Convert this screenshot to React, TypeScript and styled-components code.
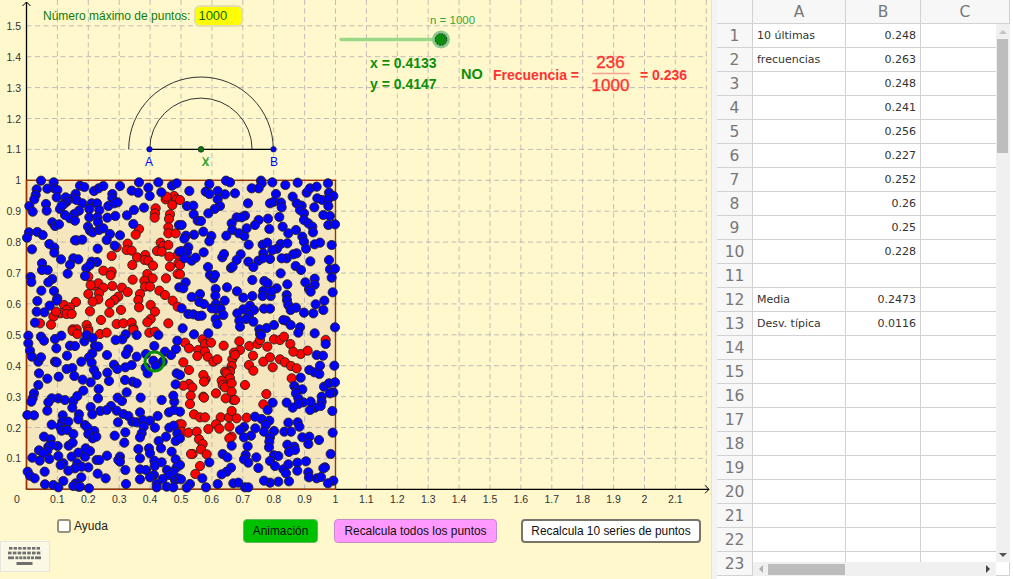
import React from 'react';
import styled, { createGlobalStyle } from 'styled-components';

// =============================================================================
// Constants
// =============================================================================

const PANEL_YELLOW = '#fff8cc';
const SQUARE_FILL = '#f6e6bd';
const GRAPH_GREEN = '#0a8f0a';
const FREQ_RED = '#ff3333';

const ORIGIN_X = 26.5;
const ORIGIN_Y = 489.3;
const STEP = 30.9;

const sx = (v: number) => ORIGIN_X + (v * 10 * STEP);
const sy = (v: number) => ORIGIN_Y - (v * 10 * STEP);

// Points read off the picture, per 160x160 tile at 3x: [tile left, tile top, "x,y ..."]
type Tile = [number, number, string];

const RED_TILES: Tile[] = [
  [20, 170, `437,88 462,78 470,88 457,105 440,80 407,115 405,130 404,143 450,133 447,147 445,172 445,190 467,190 357,177 347,194 323,221 320,240 335,242 290,232 275,258 351,262 376,255 374,270 385,272 399,287 337,285 411,243 422,218 430,228 445,225 425,245 473,255 448,260 475,280 450,290 473,312 250,302 275,305 272,316 382,312 398,325 373,332 375,350 390,350 338,329 438,325 205,320 222,347 235,340 212,345 250,353 277,348 306,353 323,366 205,372 237,370 235,388 218,395 295,380 283,390 270,400 360,372 355,390 357,412 392,405 418,362 435,375 458,392 473,410 168,396 132,405 150,412 140,420 122,430 140,432 155,432 102,438 100,440 108,425 60,460 93,464 210,424 243,450 268,428 303,420 405,425 392,447 382,457 445,460 290,462 310,460 335,458 340,475 200,465 205,478 158,478 170,478`],
  [180, 170, `0,90 0,285 0,313`],
  [20, 330, `158,3 172,12 205,5 240,12 260,8 388,8 405,5 340,0 478,283`],
  [180, 330, `15,38 27,55 55,60 68,28 75,42 75,65 93,38 131,47 178,34 180,60 162,68 157,88 165,75 155,108 148,122 150,125 135,125 140,130 150,145 125,152 128,165 135,172 155,160 155,185 160,210 165,210 137,205 108,190 70,200 72,203 77,148 70,135 72,155 27,162 10,97 27,120 52,78 83,80 100,95 112,88 10,167 37,172 32,197 30,222 195,165 208,48 233,42 240,30 262,50 282,28 300,30 312,20 331,42 362,72 383,62 340,65 437,30 219,77 250,95 270,82 300,88 315,97 333,108 350,115 207,105 220,122 278,112 335,145 259,192 250,223 42,253 60,262 75,262 122,262 147,262 155,243 170,265 200,263 108,283 85,297 118,296 148,290 5,283 5,305 25,308 50,305 57,328 68,342 63,358 38,372 33,372 80,373 155,320 148,325 60,408 46,432`],
];

const BLUE_TILES: Tile[] = [
  [20, 170, `63,32 101,37 50,58 47,75 43,88 82,56 103,55 112,60 110,82 180,47 193,51 222,63 236,55 250,48 300,48 357,37 415,37 456,47 470,40 335,62 355,68 385,53 389,78 424,67 277,72 277,85 265,108 283,100 293,97 167,72 157,85 137,82 140,95 170,90 187,100 131,103 120,117 125,107 78,102 80,122 28,108 38,125 215,100 231,100 208,117 238,120 177,122 163,132 135,135 150,145 165,152 208,142 232,142 234,157 262,143 286,138 321,136 342,120 372,113 97,157 105,168 117,163 204,170 210,182 218,187 237,180 250,175 270,192 300,196 340,162 477,165 27,187 21,203 52,186 68,195 170,211 165,211 187,209 260,210 284,227 88,222 103,233 103,248 36,238 233,236 123,268 160,265 175,268 150,284 66,280 66,300 83,300 143,311 199,295 231,276 215,275 210,285 195,318 32,321 34,336 97,327 85,337 64,362 102,363 112,385 110,392 52,393 89,407 50,425 73,427 45,458 478,245 478,352`],
  [180, 170, `88,42 138,32 150,37 243,32 245,40 277,37 316,45 353,38 444,40 215,55 236,55 28,63 77,65 88,72 113,63 135,73 165,70 113,88 120,108 104,117 85,130 21,108 40,107 41,133 53,152 63,153 5,165 204,100 270,100 282,95 303,98 305,112 288,72 338,80 350,100 365,107 360,120 372,130 403,112 380,68 390,55 410,50 447,68 460,78 412,85 427,90 445,87 445,108 430,135 450,138 298,141 264,146 236,150 195,137 170,142 185,142 155,160 157,180 177,190 193,198 200,175 225,165 268,177 308,170 325,190 348,180 372,150 385,160 397,170 399,187 445,165 465,163 70,185 42,194 18,197 13,206 94,198 88,214 139,197 367,200 372,215 378,236 404,223 420,218 455,225 206,224 248,224 262,218 302,222 322,220 291,236 277,240 250,250 350,250 340,253 320,265 305,265 270,267 235,272 205,275 220,291 248,265 25,232 21,247 5,243 13,265 35,272 47,263 71,247 127,262 132,252 182,253 170,270 153,294 158,290 84,291 90,315 100,325 105,315 391,274 447,270 347,288 363,300 302,310 450,298 465,296 455,323 217,330 253,333 263,340 322,343 290,355 250,363 17,337 10,355 107,357 141,352 171,364 106,377 60,372 35,381 58,396 72,402 190,383 217,378 248,378 272,378 275,363 320,375 321,390 376,337 404,326 404,344 387,357 392,365 458,367 433,392 407,403 134,392 108,402 95,415 108,417 122,417 130,435 5,415 25,432 40,433 55,438 65,437 190,418 210,407 222,420 207,435 172,430 198,447 220,455 252,416 270,416 325,405 332,420 348,413 372,428 400,430 430,420 310,450 318,452 107,447 112,462 178,452 180,470 282,465 260,474 238,478 332,465 360,472 465,472 8,475`],
  [20, 330, `25,17 63,20 72,32 105,27 124,17 193,34 200,15 218,24 25,40 30,62 36,80 55,95 63,82 109,55 141,77 150,47 165,48 225,48 235,50 217,70 207,82 184,95 105,95 110,97 215,98 261,75 282,104 292,117 316,112 335,105 140,117 157,114 222,120 230,135 262,128 57,130 82,146 116,140 163,138 188,149 55,165 267,153 315,150 338,155 350,160 212,157 236,177 190,182 320,187 42,190 38,205 34,215 115,205 135,210 160,213 172,198 95,205 85,217 82,242 22,255 42,256 234,205 293,203 306,213 273,228 290,242 212,231 241,243 260,240 217,253 157,233 177,253 175,268 128,256 127,275 145,275 310,252 325,258 294,277 337,275 350,277 362,203 425,210 360,247 369,270 390,272 413,258 371,290 405,293 447,247 462,240 463,215 460,197 467,163 95,284 120,290 125,302 142,300 160,312 195,285 203,293 223,303 205,312 218,325 229,320 72,320 92,328 146,347 158,338 113,348 85,350 95,345 82,362 57,361 70,370 37,383 59,392 88,387 115,378 284,317 316,307 313,338 365,310 360,322 416,333 438,320 467,333 448,293 461,287 472,310 423,355 387,355 355,357 390,370 360,385 455,365 403,392 425,397 467,388 155,380 175,368 195,380 197,355 210,363 130,400 122,405 172,400 185,410 205,412 165,415 145,422 230,390 238,390 261,377 300,380 295,390 300,395 316,420 360,418 378,420 404,408 402,435 390,442 441,420 470,412 460,425 447,435 428,447 23,425 30,437 44,445 74,425 184,442 167,460 233,431 257,445 130,453 75,463 100,465 115,472 160,468 175,470 207,475 180,470 318,462 360,448 410,462 410,472 440,470 465,450 475,445 460,472 403,48 378,72 400,92 428,95 435,65 453,75 377,113 383,130 408,108 415,15 472,32 468,57 317,13 307,28 287,30 325,58 318,72 350,15 350,80 470,130`],
  [180, 330, `42,13 85,10 240,12 243,15 355,8 404,10 437,42 410,75 429,77 388,120 403,127 418,132 420,107 463,107 362,143 343,168 350,178 367,178 348,190 355,205 432,170 447,160 465,157 460,187 450,190 425,200 425,215 422,228 405,233 390,240 392,215 370,217 355,222 338,233 320,218 278,218 263,240 457,243 225,260 245,267 268,272 257,285 252,305 282,303 270,322 268,335 267,352 192,291 180,300 226,295 213,317 192,322 203,349 155,347 325,278 353,277 358,290 313,305 333,305 367,322 388,320 385,342 417,330 458,308 322,344 343,350 345,360 327,366 452,372 128,372 142,382 197,375 192,388 205,398 229,382 88,397 153,413 140,425 125,433 235,414 282,376 295,378 270,393 285,408 325,403 310,418 318,430 352,398 378,394 352,422 385,427 387,442 435,412 430,415 410,445 423,441 460,452 444,460 327,454 295,455 270,458 252,452 113,462 160,460 175,458 195,472 205,472 67,445 78,472 30,462 20,473 3,448 0,405 0,325 0,245 0,135`],
];

const readTiles = (tiles: Tile[]) =>
  tiles.flatMap(([left, top, list]) =>
    list.split(' ').map((pair) => {
      const [x, y] = pair.split(',').map(Number);
      return { x: left + x / 3, y: top + y / 3 };
    }),
  );

const RED_POINTS = readTiles(RED_TILES);
const BLUE_POINTS = readTiles(BLUE_TILES);

const tickLabel = (k: number) => (k % 10 === 0 ? String(k / 10) : (k / 10).toFixed(1));

const SHEET_ROWS: { a?: string; b?: string }[] = [
  { a: '10 últimas', b: '0.248' },
  { a: 'frecuencias', b: '0.263' },
  { b: '0.248' },
  { b: '0.241' },
  { b: '0.256' },
  { b: '0.227' },
  { b: '0.252' },
  { b: '0.26' },
  { b: '0.25' },
  { b: '0.228' },
  {},
  { a: 'Media', b: '0.2473' },
  { a: 'Desv. típica', b: '0.0116' },
  ...Array.from({ length: 10 }, () => ({})),
];

// =============================================================================
// Styled Components
// =============================================================================

const GlobalStyle = createGlobalStyle`
  html, body {
    margin: 0;
    padding: 0;
    height: 100%;
    background: #fff;
    overflow: hidden;
  }
`;

const Page = styled.div`
  display: flex;
  width: 1013px;
  height: 579px;
  overflow: hidden;
  font-family: 'Liberation Sans', Arial, sans-serif;
`;

const GraphPanel = styled.section`
  position: relative;
  flex: 0 0 711px;
  height: 100%;
  background: ${PANEL_YELLOW};
`;

const GraphCanvas = styled.svg`
  display: block;
  width: 711px;
  height: 579px;
  font-family: 'Liberation Sans', Arial, sans-serif;
`;

const Splitter = styled.div`
  flex: 0 0 6px;
  background: #f3f3f3;
  border-left: 1px solid #e2e2e2;
  box-sizing: border-box;
`;

const MaxPoints = styled.label`
  position: absolute;
  left: 43px;
  top: 5px;
  display: flex;
  align-items: center;
  gap: 4px;
  height: 22px;
  color: #0b7d0b;
  font-size: 12px;
`;

const MaxPointsInput = styled.div`
  box-sizing: border-box;
  width: 49px;
  height: 22px;
  padding: 0 2px;
  line-height: 18px;
  font-size: 13px;
  color: #0b6a0b;
  background: #ffff00;
  border: 2px solid #e4dfae;
  border-radius: 6px;
`;

const HelpToggle = styled.label`
  position: absolute;
  left: 57px;
  top: 519px;
  display: flex;
  align-items: center;
  gap: 3px;
  font-size: 12px;
  color: #222;
`;

const CheckBox = styled.span`
  box-sizing: border-box;
  width: 14px;
  height: 14px;
  background: #fff;
  border: 2px solid #99917c;
  border-radius: 3px;
`;

const ActionButton = styled.button<{ $left: number; $width: number; $bg: string; $edge: string; $thick?: boolean }>`
  position: absolute;
  top: 519px;
  left: ${(p) => p.$left}px;
  box-sizing: border-box;
  width: ${(p) => p.$width}px;
  height: 24px;
  padding: 0;
  font-family: inherit;
  font-size: 11.9px;
  color: #111;
  background: ${(p) => p.$bg};
  border: ${(p) => (p.$thick ? 2 : 1)}px solid ${(p) => p.$edge};
  border-radius: 4px;
`;

const KeyboardButton = styled.button`
  position: absolute;
  left: 0;
  top: 541px;
  box-sizing: border-box;
  width: 50px;
  height: 31px;
  padding: 0;
  display: flex;
  align-items: center;
  justify-content: center;
  background: #fbf8e6;
  border: 1px solid #e6e6e0;
`;

const SheetPanel = styled.section`
  position: relative;
  flex: 1;
  height: 100%;
  overflow: hidden;
  background: #fff;
`;

const SheetGrid = styled.div`
  display: grid;
  width: 293px;
  grid-template-columns: 36px 93px 75px 89px;
  grid-auto-rows: 24px;
  font-family: 'DejaVu Sans', sans-serif;
`;

const cellEdges = `
  box-sizing: border-box;
  border-right: 1px solid #d2d2d2;
  border-bottom: 1px solid #d2d2d2;
`;

const HeaderCell = styled.div`
  ${cellEdges}
  display: flex;
  align-items: center;
  justify-content: center;
  background: #f7f7f7;
  color: #777;
  font-size: 15.5px;
`;

const Cell = styled.div<{ $right?: boolean }>`
  ${cellEdges}
  padding: 0 4px;
  line-height: 23px;
  font-size: 11px;
  color: #333;
  white-space: nowrap;
  overflow: hidden;
  text-align: ${(p) => (p.$right ? 'right' : 'left')};
`;

const VerticalBar = styled.div`
  position: absolute;
  left: 279px;
  top: 24px;
  width: 14px;
  height: 538px;
  background: #f0f0f0;
`;

const VerticalThumb = styled.div`
  position: absolute;
  left: 1px;
  top: 15px;
  width: 11px;
  height: 114px;
  background: #bdbdbd;
`;

const HorizontalBar = styled.div`
  position: absolute;
  left: 36px;
  top: 562px;
  width: 243px;
  height: 14px;
  background: #f0f0f0;
`;

const HorizontalThumb = styled.div`
  position: absolute;
  left: 15px;
  top: 2px;
  width: 77px;
  height: 11px;
  background: #bdbdbd;
`;

const Arrow = styled.span<{ $dir: 'up' | 'down' | 'left' | 'right'; $pos: string }>`
  position: absolute;
  width: 0;
  height: 0;
  ${(p) => p.$pos}
  border-style: solid;
  border-color: transparent;
  ${(p) =>
    p.$dir === 'up'
      ? 'border-width: 0 4px 4px; border-bottom-color: #c4c4c4;'
      : p.$dir === 'down'
        ? 'border-width: 4px 4px 0; border-top-color: #555;'
        : p.$dir === 'left'
          ? 'border-width: 4px 4px 4px 0; border-right-color: #b0b0b0;'
          : 'border-width: 4px 0 4px 4px; border-left-color: #444;'}
`;

// =============================================================================
// Graph
// =============================================================================

const Dots = ({ points, fill }: { points: { x: number; y: number }[]; fill: string }) => (
  <g fill={fill} stroke="#2a2020" strokeWidth={0.9}>
    {points.map((p, i) => (
      <circle key={i} cx={p.x} cy={p.y} r={4.6} />
    ))}
  </g>
);

const Graph = () => {
  const columns = Array.from({ length: 22 }, (_, i) => i + 1);
  const lines = Array.from({ length: 15 }, (_, i) => i + 1);
  return (
    <GraphCanvas viewBox="0 0 711 579">
      {/* square under the grid */}
      <rect x={sx(0)} y={sy(1)} width={sx(1) - sx(0)} height={sy(0) - sy(1)} fill={SQUARE_FILL} />

      <g stroke="#a9a9b0" strokeOpacity={0.75} strokeWidth={1} strokeDasharray="5 3.5">
        {columns.map((k) => (
          <line key={k} x1={sx(k / 10)} y1={0} x2={sx(k / 10)} y2={ORIGIN_Y} />
        ))}
        {lines.map((k) => (
          <line key={k} x1={ORIGIN_X} y1={sy(k / 10)} x2={707} y2={sy(k / 10)} />
        ))}
      </g>

      {/* axes */}
      <g stroke="#000" strokeWidth={1.3} fill="none">
        <line x1={ORIGIN_X} y1={2} x2={ORIGIN_X} y2={ORIGIN_Y} />
        <line x1={ORIGIN_X} y1={ORIGIN_Y} x2={709} y2={ORIGIN_Y} />
        <path d="M22.5 6 L26.5 2 L30.5 6" strokeWidth={1} />
        <path d="M705 485.3 L709 489.3 L705 493.3" strokeWidth={1} />
      </g>

      <g fontSize={10.5} fill="#333">
        <text x={17} y={503} textAnchor="middle">0</text>
        {columns.slice(0, 21).map((k) => (
          <text key={k} x={sx(k / 10)} y={503} textAnchor="middle">{tickLabel(k)}</text>
        ))}
        {lines.map((k) => (
          <text key={k} x={21} y={sy(k / 10) + 4} textAnchor="end">{tickLabel(k)}</text>
        ))}
      </g>

      <rect
        x={sx(0)}
        y={sy(1)}
        width={sx(1) - sx(0)}
        height={sy(0) - sy(1)}
        fill="none"
        stroke="#993300"
        strokeWidth={1.4}
      />

      <Dots points={RED_POINTS} fill="#ff0000" />
      <Dots points={BLUE_POINTS} fill="#0000ff" />
      <circle cx={154.5} cy={361.5} r={9.5} fill="none" stroke={GRAPH_GREEN} strokeWidth={3} />

      {/* segment AB and the two arcs */}
      <g fill="none" stroke="#333" strokeWidth={1}>
        <path d="M128.7 149.3 A72.3 72.3 0 0 1 273.3 149.3" />
        <path d="M149.7 149.3 A51.2 51.2 0 0 1 252.1 149.3" />
      </g>
      <line x1={149.5} y1={149.3} x2={273.5} y2={149.3} stroke="#000" strokeWidth={1.3} />
      <circle cx={149.5} cy={149.3} r={2.8} fill="#0000ff" stroke="#222" strokeWidth={0.6} />
      <circle cx={273.5} cy={149.3} r={2.8} fill="#0000ff" stroke="#222" strokeWidth={0.6} />
      <circle cx={201} cy={149.3} r={2.9} fill="#0a7a0a" stroke="#222" strokeWidth={0.7} />
      <g fontSize={12} fill="#0000ff">
        <text x={149} y={166} textAnchor="middle">A</text>
        <text x={274} y={166} textAnchor="middle">B</text>
      </g>
      <g fontSize={12} fill="#2f9f2f">
        <text x={205.5} y={166} textAnchor="middle">X</text>
        <text x={205.5} y={166} textAnchor="middle" fontStyle="italic">x</text>
      </g>

      {/* slider */}
      <line x1={341} y1={39.5} x2={441} y2={39.5} stroke="#9ad888" strokeWidth={3.4} strokeLinecap="round" />
      <circle cx={441} cy={39.5} r={9} fill="#8cc98c" />
      <circle cx={441} cy={39.5} r={5.8} fill="#0a8f0a" stroke="#222" strokeWidth={0.9} strokeDasharray="2 1" />
      <text x={430} y={24} fontSize={11.5} fill="#3aa53a">n = 1000</text>

      {/* readouts */}
      <g fontWeight="bold" fill={GRAPH_GREEN}>
        <text x={370} y={68} fontSize={14}>x = 0.4133</text>
        <text x={370} y={89} fontSize={14}>y = 0.4147</text>
        <text x={461} y={79} fontSize={14.5}>NO</text>
      </g>
      <g fontWeight="bold" fill={FREQ_RED}>
        <text x={493} y={80} fontSize={14}>Frecuencia =</text>
        <text x={640} y={80} fontSize={14}>= 0.236</text>
      </g>
      <g fill={FREQ_RED} stroke={FREQ_RED} strokeWidth={0.35} fontSize={17} textAnchor="middle">
        <text x={610.5} y={67.5}>236</text>
        <text x={610.5} y={90.5}>1000</text>
      </g>
      <line x1={592} y1={73.5} x2={630} y2={73.5} stroke="#ff9f8f" strokeWidth={1.6} />
    </GraphCanvas>
  );
};

const KeyboardIcon = () => (
  <svg width="34" height="19" viewBox="0 0 34 19" fill="#6f6f6f">
    {[0, 1, 2, 3, 4, 5, 6].map((i) => (
      <rect key={`a${i}`} x={1 + i * 4.6} y={0} width={3.4} height={2.6} />
    ))}
    {[0, 1, 2, 3, 4, 5, 6].map((i) => (
      <rect key={`b${i}`} x={0 + i * 4.8} y={4.6} width={3.6} height={2.8} />
    ))}
    <rect x={0} y={9.4} width={6} height={2.8} />
    {[0, 1, 2, 3, 4].map((i) => (
      <rect key={`c${i}`} x={7.4 + i * 3.9} y={9.4} width={3} height={2.8} />
    ))}
    <rect x={27} y={9.4} width={6} height={2.8} />
    <rect x={8.5} y={15} width={16} height={3} />
  </svg>
);

// =============================================================================
// Main Component
// =============================================================================

const App = () => (
  <Page>
    <GlobalStyle />
    <GraphPanel>
      <Graph />
      <MaxPoints>
        Número máximo de puntos:
        <MaxPointsInput>1000</MaxPointsInput>
      </MaxPoints>
      <HelpToggle>
        <CheckBox />
        Ayuda
      </HelpToggle>
      <ActionButton $left={243} $width={75} $bg="#00c000" $edge="#5fb85f">Animación</ActionButton>
      <ActionButton $left={334} $width={163} $bg="#ff99ff" $edge="#c98ac9">Recalcula todos los puntos</ActionButton>
      <ActionButton $left={521} $width={180} $bg="#fff" $edge="#77756a" $thick>Recalcula 10 series de puntos</ActionButton>
      <KeyboardButton>
        <KeyboardIcon />
      </KeyboardButton>
    </GraphPanel>
    <Splitter />
    <SheetPanel>
      <SheetGrid>
        <HeaderCell />
        <HeaderCell>A</HeaderCell>
        <HeaderCell>B</HeaderCell>
        <HeaderCell>C</HeaderCell>
        {SHEET_ROWS.map((row, i) => (
          <React.Fragment key={i}>
            <HeaderCell>{i + 1}</HeaderCell>
            <Cell>{row.a}</Cell>
            <Cell $right>{row.b}</Cell>
            <Cell />
          </React.Fragment>
        ))}
      </SheetGrid>
      <VerticalBar>
        <VerticalThumb />
        <Arrow $dir="up" $pos="left: 3px; top: 6px;" />
        <Arrow $dir="down" $pos="left: 3px; bottom: 5px;" />
      </VerticalBar>
      <HorizontalBar>
        <Arrow $dir="left" $pos="left: 6px; top: 3px;" />
        <HorizontalThumb />
        <Arrow $dir="right" $pos="right: 6px; top: 3px;" />
      </HorizontalBar>
    </SheetPanel>
  </Page>
);

export default App;
